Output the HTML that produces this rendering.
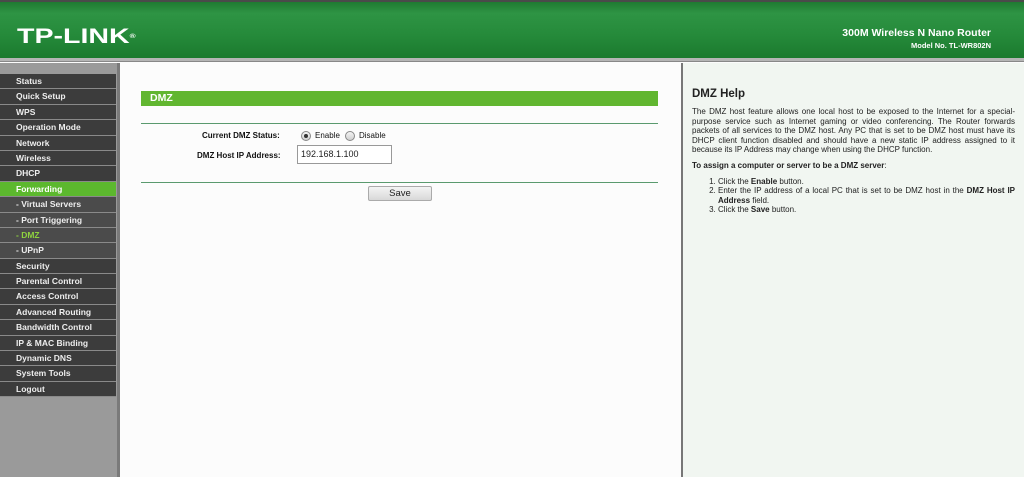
<!DOCTYPE html>
<html><head><style>
*{margin:0;padding:0;box-sizing:border-box}
body{width:1024px;height:477px;overflow:hidden;font-family:"Liberation Sans",sans-serif;background:#fcfcfc;position:relative}
.hdr{position:absolute;left:0;top:0;width:1024px;height:58px;background:linear-gradient(#1f7a31 0,#2e9444 20%,#258a3a 60%,#1b7a2e 100%);border-top:2px solid #4a4a4a}
.hdrline{position:absolute;left:0;top:58px;width:1024px;height:4px;background:#b5b5b5;border-bottom:1px solid #888}
.logo{position:absolute;left:17px;top:24px;color:#fff;font-weight:bold;font-size:21px;transform:scaleX(1.36);transform-origin:left;line-height:22px}
.t1{position:absolute;right:33px;top:25px;color:#fff;font-weight:bold;font-size:10.5px}
.t2{position:absolute;right:33px;top:39px;color:#fff;font-weight:bold;font-size:7.5px}
.side{position:absolute;left:0;top:63px;width:117px;height:414px;background:#9a9a9a}
.sb{position:absolute;left:117px;top:63px;width:3px;height:414px;background:#7a7a7a}
.menu{position:absolute;left:0;top:74px;width:116px}
.menu div{height:15.4px;line-height:14.4px;border-bottom:1px solid #8a8a8a;background:#3c3c3c;color:#eee;font-weight:bold;font-size:8.5px;padding-left:16px}
.menu div.sub{background:#4b4b4b}
.menu div.act{background:#5cb82e;color:#fff}
.menu div.cur{color:#8ed13f}
.div{position:absolute;left:681px;top:63px;width:2px;height:414px;background:#777}
.help{position:absolute;left:683px;top:63px;width:341px;height:414px;background:#f1f6f1;padding:25px 9px 0 9px;color:#222;font-size:8px}
.help h2{font-size:11.5px;margin-bottom:7px}
.help p{text-align:justify;line-height:9.6px}
.help ol{margin:6px 0 0 26px;line-height:9.5px}
.bar{position:absolute;left:141px;top:91px;width:517px;height:15px;background:#61b630;color:#fff;font-weight:bold;font-size:10.5px;line-height:15px;padding-left:9px}
.ln{position:absolute;left:141px;width:517px;height:1px;background:#5a9a6e}
.lb{position:absolute;font-weight:bold;font-size:8px;color:#111}
.rad{position:absolute;width:10px;height:10px;border-radius:50%;border:1px solid #888;background:linear-gradient(#f4f4f4,#d0d0d0)}
.inp{position:absolute;left:297px;top:145px;width:95px;height:19px;border:1px solid #999;background:#fff;font-size:9px;padding:3px 0 0 3px;color:#222}
.btn{position:absolute;left:368px;top:186px;width:64px;height:15px;border:1px solid #aaa;border-radius:2px;background:linear-gradient(#f4f4f4,#d8d8d8);font-size:9.5px;text-align:center;line-height:13px;color:#222}
</style></head><body>
<div class="hdr"><div class="logo">TP-LINK<span style="font-size:6px;vertical-align:top">®</span></div><div class="t1">300M Wireless N Nano Router</div><div class="t2">Model No. TL-WR802N</div></div>
<div class="hdrline"></div>
<div class="side"></div><div class="sb"></div>
<div class="menu">
<div>Status</div><div>Quick Setup</div><div>WPS</div><div>Operation Mode</div><div>Network</div><div>Wireless</div><div>DHCP</div><div class="act">Forwarding</div><div class="sub">- Virtual Servers</div><div class="sub">- Port Triggering</div><div class="sub cur">- DMZ</div><div class="sub">- UPnP</div><div>Security</div><div>Parental Control</div><div>Access Control</div><div>Advanced Routing</div><div>Bandwidth Control</div><div>IP &amp; MAC Binding</div><div>Dynamic DNS</div><div>System Tools</div><div>Logout</div>
</div>
<div class="bar">DMZ</div>
<div class="ln" style="top:123px"></div>
<div class="lb" style="left:202px;top:131px">Current DMZ Status:</div>
<div class="rad" style="left:301px;top:131px"><div style="width:4px;height:4px;border-radius:50%;background:#333;margin:2px 0 0 2px"></div></div>
<div class="lb" style="left:315px;top:131px;font-weight:normal">Enable</div>
<div class="rad" style="left:345px;top:131px"></div>
<div class="lb" style="left:359px;top:131px;font-weight:normal">Disable</div>
<div class="lb" style="left:197px;top:151px">DMZ Host IP Address:</div>
<div class="inp">192.168.1.100</div>
<div class="ln" style="top:182px"></div>
<div class="btn">Save</div>
<div class="div"></div>
<div class="help">
<h2>DMZ Help</h2>
<p>The DMZ host feature allows one local host to be exposed to the Internet for a special-purpose service such as Internet gaming or video conferencing. The Router forwards packets of all services to the DMZ host. Any PC that is set to be DMZ host must have its DHCP client function disabled and should have a new static IP address assigned to it because its IP Address may change when using the DHCP function.</p>
<p style="margin-top:6px"><b>To assign a computer or server to be a DMZ server</b>:</p>
<ol><li>Click the <b>Enable</b> button.</li><li style="text-align:justify">Enter the IP address of a local PC that is set to be DMZ host in the <b>DMZ Host IP Address</b> field.</li><li>Click the <b>Save</b> button.</li></ol>
</div>
</body></html>
